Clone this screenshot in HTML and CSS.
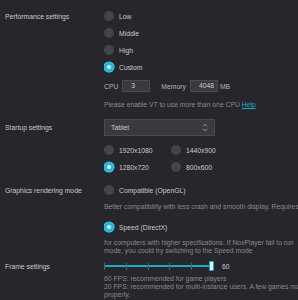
FILE: index.html
```html
<!DOCTYPE html>
<html>
<head>
<meta charset="utf-8">
<link rel="stylesheet" href="styles.css">
</head>
<body>
<div class="page">
  <div class="row">
    <div class="label">Performance settings</div>
    <div class="content">
      <div class="opt"><span class="radio"></span><span>Low</span></div>
      <div class="opt"><span class="radio"></span><span>Middle</span></div>
      <div class="opt"><span class="radio"></span><span>High</span></div>
      <div class="opt"><span class="radio on"></span><span>Custom</span></div>
      <div class="cpu">
        <span class="lbl">CPU</span><span class="input">3</span>
        <span class="lbl mem">Memory</span><span class="input">4048</span><span class="lbl unit">MB</span>
      </div>
      <div class="hint vt">Please enable VT to use more than one CPU <a class="help">Help</a></div>
    </div>
  </div>

  <div class="row startup">
    <div class="label">Startup settings</div>
    <div class="content">
      <div class="select"><span>Tablet</span>
        <svg class="chev" width="6" height="9" viewBox="0 0 6 9"><path d="M1 3.2 L3 1.2 L5 3.2 M1 5.8 L3 7.8 L5 5.8" fill="none" stroke="#a9a9ad" stroke-width="0.9"/></svg>
      </div>
      <div class="grid2">
        <div class="opt"><span class="radio"></span><span>1920x1080</span></div>
        <div class="opt"><span class="radio"></span><span>1440x900</span></div>
        <div class="opt"><span class="radio on"></span><span>1280x720</span></div>
        <div class="opt"><span class="radio"></span><span>800x600</span></div>
      </div>
    </div>
  </div>

  <div class="row graphics">
    <div class="label">Graphics rendering mode</div>
    <div class="content">
      <div class="opt"><span class="radio"></span><span>Compatible (OpenGL)</span></div>
      <div class="hint better">Better compatibility with less crash and smooth display. Requires</div>
      <div class="opt speed"><span class="radio on"></span><span>Speed (DirectX)</span></div>
      <div class="hint computers">for computers with higher specifications. If NoxPlayer fail to run<br>mode, you could try switching to the Speed mode</div>
    </div>
  </div>

  <div class="row frame">
    <div class="label">Frame settings</div>
    <div class="content">
      <div class="slider-row">
        <div class="slider">
          <span class="tick"></span><span class="tick"></span><span class="tick"></span><span class="tick"></span><span class="tick"></span>
          <span class="thumb"></span>
        </div>
        <span class="val">60</span>
      </div>
      <div class="hint fps">60 FPS: recommended for game players<br>20 FPS: recommended for multi-instance users. A few games may<br>properly.</div>
    </div>
  </div>
</div>
</body>
</html>
```

FILE: styles.css
```css
html, body {
  margin: 0;
  padding: 0;
  background: #27262b;
  overflow: hidden;
}
body {
  width: 298px;
  height: 300px;
  font-family: "Liberation Sans", Arial, sans-serif;
  font-size: 6.8px;
  color: #c9c9cc;
}
.page {
  padding: 7.5px 0 0 5px;
  white-space: nowrap;
  overflow: hidden;
}
.row {
  display: grid;
  grid-template-columns: 99px 1fr;
}
.label {
  line-height: 17px;
  height: 17px;
}
.content {
  display: flex;
  flex-direction: column;
  min-width: 0;
  overflow: hidden;
}
.opt {
  display: flex;
  align-items: center;
  height: 17px;
  gap: 5px;
  flex: none;
}
.radio {
  width: 10px;
  height: 10px;
  border-radius: 50%;
  background: #454449;
  box-sizing: border-box;
  flex: none;
}
.radio.on {
  background: #ffffff;
  border: 3.3px solid #1bb6e3;
  box-shadow: 0 0 0 0.6px #4fcdf0;
}
.cpu {
  display: flex;
  align-items: center;
  height: 12px;
  margin-top: 4.5px;
  flex: none;
}
.lbl {
  color: #b5b5b8;
}
.input {
  width: 28px;
  height: 12px;
  box-sizing: border-box;
  background: #3a393e;
  border: 1px solid #4b4a50;
  padding-left: 8px;
  line-height: 10px;
  margin-left: 4px;
  color: #c9c9cc;
}
.mem {
  margin-left: 11px;
}
.unit {
  margin-left: 2px;
}
.hint {
  color: #8a898e;
  line-height: 8px;
  flex: none;
}
.vt {
  margin-top: 9px;
}
.help {
  color: #1aa9c9;
  text-decoration: underline;
}
.startup {
  margin-top: 10px;
}
.select {
  width: 111px;
  height: 17px;
  box-sizing: border-box;
  background: #3a393e;
  border: 1px solid #4b4a50;
  display: flex;
  align-items: center;
  justify-content: space-between;
  padding: 0 6px 0 6px;
  flex: none;
}
.grid2 {
  display: grid;
  grid-template-columns: 67px 1fr;
  margin-top: 5.5px;
}
.graphics {
  margin-top: 6px;
}
.better {
  margin-top: 4.5px;
}
.speed {
  margin-top: 7.5px;
}
.computers {
  margin-top: 3.5px;
}
.frame {
  margin-top: 2.5px;
}
.slider-row {
  display: flex;
  align-items: center;
  height: 17px;
}
.slider {
  position: relative;
  width: 110px;
  height: 2px;
  background: #1aa9c9;
  display: flex;
  justify-content: space-between;
  padding-right: 22px;
  box-sizing: border-box;
}
.tick {
  width: 1px;
  height: 7px;
  margin-top: -2.5px;
  background: #5a5960;
}
.thumb {
  position: absolute;
  right: 0;
  top: -4px;
  width: 5px;
  height: 10px;
  box-sizing: border-box;
  background: #dff6fc;
  border: 1.3px solid #1aa9c9;
  border-radius: 1px;
}
.val {
  margin-left: 8px;
}
.fps {
  margin-top: 0.5px;
}
```
